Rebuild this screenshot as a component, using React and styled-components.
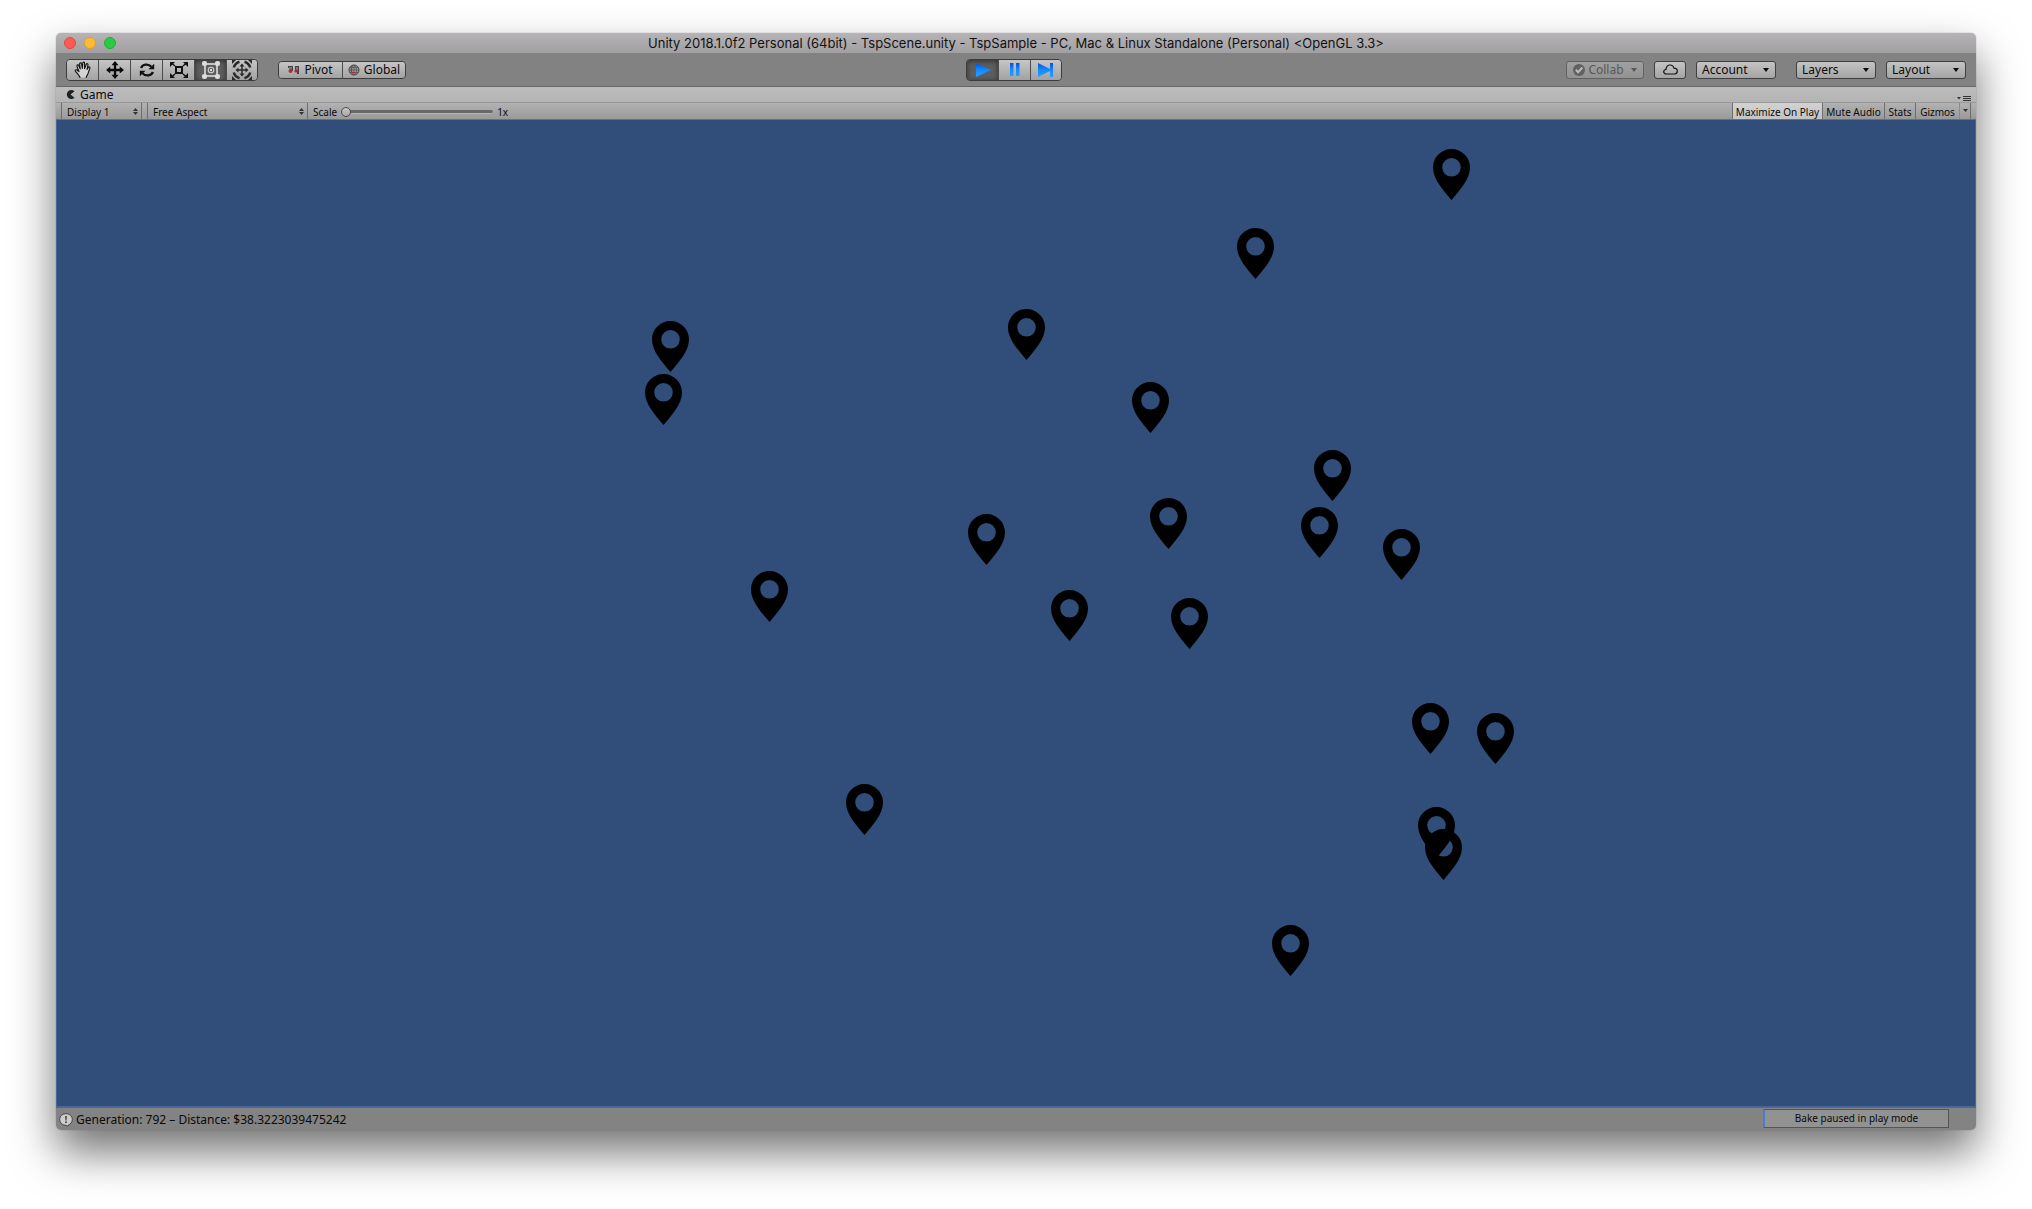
import React from "react";
import styled, { createGlobalStyle } from "styled-components";

const Global = createGlobalStyle`
  * { box-sizing: border-box; }
  body { margin: 0; background: #fff; }
  button, select, input { font: inherit; color: inherit; margin: 0; }
`;

const Desktop = styled.div`
  min-height: 100vh;
  padding: 33px 56px 79px;
  display: flex;
  font-family: "Noto Sans", "Open Sans", sans-serif;
  font-size: 12px;
  color: #0a0a0a;
`;

const Window = styled.main`
  flex: 1;
  min-width: 0;
  display: flex;
  flex-direction: column;
  border-radius: 5px;
  overflow: hidden;
  box-shadow: 0 0 1px rgba(0, 0, 0, 0.5), 0 22px 44px rgba(0, 0, 0, 0.55);
`;

const TitleBar = styled.header`
  height: 20px;
  display: grid;
  grid-template-columns: 1fr auto 1fr;
  align-items: center;
  padding: 0 8px;
  background: linear-gradient(#b7b4b7, #a29fa2);
`;

const Lights = styled.div`
  display: flex;
  gap: 8px;
`;

const Light = styled.button`
  width: 12px;
  height: 12px;
  padding: 0;
  border-radius: 50%;
  border: 1px solid ${(p) => p.$edge};
  background: ${(p) => p.$fill};
`;

const Title = styled.h1`
  margin: 0;
  font: 400 13px/20px Inter, sans-serif;
  color: #111;
  white-space: nowrap;
`;

const Toolbar = styled.div`
  height: 34px;
  display: grid;
  grid-template-columns: 1fr auto 1fr;
  align-items: center;
  padding: 0 10px;
  background: #828282;
  border-bottom: 1px solid #666;
`;

const Cluster = styled.div`
  display: flex;
  align-items: center;
  gap: ${(p) => p.$gap || 0}px;
  justify-content: ${(p) => (p.$end ? "flex-end" : "flex-start")};
`;

const Segments = styled.div`
  display: flex;
  height: ${(p) => (p.$tall ? 22 : 18)}px;
  margin-right: ${(p) => (p.$center ? 4 : 0)}px;
  border: 1px solid #3c3c3c;
  border-radius: 4px;
  overflow: hidden;
`;

const Segment = styled.button`
  width: ${(p) => p.$width || 32}px;
  padding: 0;
  display: flex;
  align-items: center;
  justify-content: center;
  gap: 4px;
  border: 0;
  border-right: 1px solid #4c4c4c;
  line-height: 16px;
  background: linear-gradient(#c6c6c6, #a2a2a2);
  &:last-child { border-right: 0; width: ${(p) => (p.$width || 32) - 2}px; }
  &[aria-pressed="true"] {
    background: #5e5e5e;
    box-shadow: inset 0 1px 5px #2e2e2e;
  }
`;

const control = `
  height: 18px;
  border: 1px solid #404040;
  border-radius: 3px;
  background: linear-gradient(#c4c4c4, #a4a4a4);
`;

const PlainButton = styled.button`
  ${control}
  width: ${(p) => p.$width}px;
  padding: 0;
  display: flex;
  align-items: center;
  justify-content: center;
  gap: 3px;
  line-height: 16px;
  &:disabled {
    color: #585858;
    border-color: #626262;
    background: linear-gradient(#a0a0a0, #929292);
  }
`;

const Picker = styled.label`
  display: grid;
  align-items: center;
  width: ${(p) => p.$width}px;
  > * { grid-area: 1 / 1; }
  > svg { justify-self: end; margin-right: ${(p) => p.$inset || 7}px; pointer-events: none; }
`;

const PopupSelect = styled.select`
  ${control}
  appearance: none;
  width: 100%;
  padding: 0 5px;
  line-height: 16px;
`;

const Spacer = styled.span`
  width: ${(p) => p.$width}px;
`;

const TabRow = styled.div`
  height: 16px;
  display: flex;
  align-items: center;
  justify-content: space-between;
  padding: 0 5px 0 10px;
  background: linear-gradient(#bcbcbc, #b4b4b4);
  border-bottom: 1px solid #989898;
`;

const Tab = styled.button`
  padding: 0;
  border: 0;
  background: none;
  display: flex;
  align-items: center;
  gap: 5px;
  line-height: 15px;
`;

const MenuButton = styled.button`
  padding: 0;
  border: 0;
  background: none;
  display: flex;
  align-self: flex-end;
`;

const ViewBar = styled.div`
  height: 17px;
  display: flex;
  justify-content: space-between;
  padding: 0 5px;
  font-size: 10px;
  background: linear-gradient(#b2b2b2, #9a9a9a);
  border-bottom: 1px solid #707070;
`;

const BarGroup = styled.div`
  display: flex;
  align-items: stretch;
`;

const BarPicker = styled(Picker)`
  border-left: 1px solid #6e6e6e;
  border-right: 1px solid #6e6e6e;
  margin-right: ${(p) => p.$after || 0}px;
`;

const BarSelect = styled.select`
  appearance: none;
  width: 100%;
  height: 16px;
  padding: 2px 5px 0;
  border: 0;
  background: none;
  line-height: 14px;
`;

const ScaleField = styled.label`
  display: flex;
  align-items: center;
  gap: 4px;
  padding: 2px 0 0 5px;
  line-height: 14px;
`;

const Slider = styled.input`
  appearance: none;
  width: 152px;
  height: 10px;
  background: none;
  &::-webkit-slider-runnable-track {
    height: 4px;
    border-radius: 2px;
    background: #686868;
    border-bottom: 1px solid #b4b4b4;
  }
  &::-webkit-slider-thumb {
    appearance: none;
    width: 10px;
    height: 10px;
    margin-top: -3px;
    border-radius: 50%;
    border: 1px solid #4a4a4a;
    background: linear-gradient(#c8c8c8, #a6a6a6);
  }
`;

const Toggle = styled.button`
  width: ${(p) => p.$width}px;
  padding: 2px 0 0;
  border: 0;
  border-left: 1px solid ${(p) => (p.$faint ? "#8a8a8a" : "#6e6e6e")};
  background: none;
  line-height: 14px;
  white-space: nowrap;
  &[aria-pressed="true"] { background: linear-gradient(#d2d2d2, #c4c4c4); }
  &:last-child { border-right: 1px solid #6e6e6e; }
  > svg { display: block; margin: 0 auto 4px; }
`;

const Scene = styled.section`
  flex: 1;
  min-height: 900px;
  position: relative;
  background: #314d79;
  border: solid #46679c;
  border-width: 0 1px 1px;
`;

const Marker = styled.svg`
  position: absolute;
  left: calc(50% + ${(p) => p.$x}px);
  top: calc(50% + ${(p) => p.$y}px);
  width: 37px;
  height: 51px;
  margin: -18px 0 0 -18px;
`;

const StatusBar = styled.footer`
  height: 23px;
  display: flex;
  align-items: flex-start;
  justify-content: space-between;
  padding: 1px 27px 0 3px;
  background: #838383;
  border-top: 1px solid #666;
`;

const Message = styled.p`
  margin: 0;
  display: flex;
  align-items: center;
  gap: 3px;
  line-height: 21px;
`;

const Task = styled.div`
  width: 186px;
  height: 19px;
  border: 1px solid #555;
  border-left: 2px solid #5079cc;
  background: #929292;
  font-size: 10px;
  line-height: 16px;
  text-align: center;
`;

const Arrow = () => (
  <svg width="6" height="4" viewBox="0 0 6 4" aria-hidden="true"><path d="M0 0h6L3 4z" fill="currentColor" /></svg>
);
const SmallArrow = () => (
  <svg width="5" height="3" viewBox="0 0 5 3" aria-hidden="true"><path d="M0 0h5L2.5 3z" fill="#333" /></svg>
);
const Steps = () => (
  <svg width="5" height="7" viewBox="0 0 5 7" aria-hidden="true"><path d="M0 3h5L2.500 0zM0 4h5L2.500 7z" fill="#333" /></svg>
);

const Hand = () => (
  <svg width="18" height="18" viewBox="0 0 18 18" fill="#d4d4d4" stroke="#111" strokeWidth="1.100" strokeLinejoin="round" strokeLinecap="round">
    <path d="M6 16.500C5.500 14.500 3.600 12.500 1.500 10.300c-.9-1.100.6-2 1.500-1.300L5 10.700 3 5.200c-.4-1.400 1.200-1.900 1.700-.7L6.300 8 5.600 3c0-1.400 1.700-1.500 1.900-.2L8.400 7.500 8.800 2c.2-1.200 1.800-1.100 1.800.2V7.600L12.300 3.300c.5-1.200 2-.6 1.700.7L13 8.400l1.300-2c.8-1 2-.3 1.600.8-1 2.300-1.300 4-2 5.700-.5 1.400-1.500 2-1.700 3.600" />
  </svg>
);
const Move = () => (
  <svg width="18" height="18" viewBox="0 0 18 18">
    <path fill="#0a0a0a" d="M9 0l3.500 4.300H10.200V7.800H13.700V5.500L18 9l-4.300 3.500V10.200H10.200V13.700H12.500L9 18l-3.500-4.300H7.800V10.200H4.300V12.500L0 9l4.300-3.500V7.800H7.800V4.300H5.500z" />
  </svg>
);
const Rotate = () => (
  <svg width="16" height="16" viewBox="0 0 16 16" fill="none" stroke="#111" strokeWidth="2.200">
    <path d="M2 6C3.500 2.300 9 1.200 12.500 4.800M14 10C12.500 13.700 7 14.800 3.500 11.200" />
    <path fill="#111" stroke="none" d="M15.200 1.800v5.500H9.500zM.8 14.200V8.700H6.500z" />
  </svg>
);
const Scale = () => (
  <svg width="18" height="16" viewBox="0 0 18 16" fill="none" stroke="#111" strokeWidth="1.500">
    <rect x="6" y="5" width="6" height="6" strokeWidth="2" />
    <path d="M2 1.500l3 2.500M16 1.500L13 4M2 14.500L5 12M16 14.500L13 12" />
    <path fill="#111" stroke="none" d="M0 0h5L0 5zM18 0h-5l5 5zM0 16h5l-5-5zM18 16h-5l5-5z" />
  </svg>
);
const Rect = () => (
  <svg width="18" height="18" viewBox="0 0 18 18">
    <path d="M3 3h12v12H3z" fill="none" stroke="#c4c4c4" strokeWidth="2" />
    <g fill="#dcdcdc">
      <rect x="0" y="0" width="5" height="5" rx="2" />
      <rect x="13" y="0" width="5" height="5" rx="2" />
      <rect x="0" y="13" width="5" height="5" rx="2" />
      <rect x="13" y="13" width="5" height="5" rx="2" />
      <circle cx="9" cy="9" r="1.200" />
    </g>
    <circle cx="9" cy="9" r="2.800" fill="none" stroke="#d0d0d0" strokeWidth="1.100" />
  </svg>
);
const Transform = () => (
  <svg width="20" height="20" viewBox="0 0 20 20">
    <g fill="none" stroke="#2a2a2a">
      <path strokeWidth="2.600" d="M7.500 1.800A8.500 8.500 0 0 0 1.800 7.500M12.500 1.800A8.500 8.500 0 0 1 18.200 7.500M1.800 12.500A8.500 8.500 0 0 0 7.500 18.200M12.500 18.200A8.500 8.500 0 0 0 18.200 12.500" />
      <path strokeWidth="1.500" d="M10 6v8M6 10h8" />
    </g>
    <path fill="#2a2a2a" d="M10 3.500l2.500 3h-5zM10 16.500l2.500-3h-5zM3.500 10l3-2.500v5zM16.500 10l-3-2.500v5zM0 0h4L0 4zM20 0v4l-4-4zM0 20v-4l4 4zM20 20h-4l4-4z" />
  </svg>
);
const PivotIcon = () => (
  <svg width="12" height="10" viewBox="0 0 12 10">
    <path fill="#444" d="M0 1h5v5H3V3H0zM7 1h4v8H9V5H7z" />
    <path fill="#777" d="M1 2h3v3H1zM8 2h2v3H8z" />
    <circle cx="2.500" cy="6" r="2" fill="#b22a3a" /><circle cx="8" cy="6" r="1.600" fill="#b22a3a" />
  </svg>
);
const GlobeIcon = () => (
  <svg width="12" height="12" viewBox="0 0 12 12" fill="none">
    <circle cx="6" cy="6" r="5" fill="#9a9a9a" stroke="#444" />
    <path stroke="#505050" strokeWidth=".7" d="M1 6h10M6 1v10M2 3.500h8M2 8.500h8M6 1C2.500 4 2.500 8 6 11M6 1c3.500 3 3.500 7 0 10" />
    <path stroke="#b22a3a" strokeWidth="1.200" d="M3.500 2.500v6H7" />
  </svg>
);
const Media = ({ d }) => (
  <svg width="16" height="14" viewBox="0 0 16 14">
    <linearGradient id="media" x1="0" y1="0" x2="0" y2="1"><stop offset="0" stopColor="#0a4fe0" /><stop offset=".5" stopColor="#118dff" /><stop offset="1" stopColor="#2c9cff" /></linearGradient>
    <path d={d} fill="url(#media)" />
  </svg>
);
const CollabIcon = () => (
  <svg width="12" height="12" viewBox="0 0 12 12"><circle cx="6" cy="6" r="6" fill="#616161" /><path d="M2.800 5.800l2.300 2.500L9.300 3.500" fill="none" stroke="#bbb" strokeWidth="2" /></svg>
);
const Cloud = () => (
  <svg width="15" height="11" viewBox="0 0 15 11"><path d="M3.500 10C1.700 10 .7 8.900.7 7.700c0-1.300 1-2.200 2.300-2.200C3 2.500 5 1 7 1c2.200 0 3.500 1.300 4 3.200 2 0 3.300 1.300 3.300 2.900S13 10 11.500 10z" fill="none" stroke="#111" strokeWidth="1.200" /></svg>
);
const GameIcon = () => (
  <svg width="9" height="9" viewBox="0 0 9 9"><path fill="#222" d="M8.500 1.300A4.500 4.500 0 1 0 8.500 7.700L4.500 4.500z" /></svg>
);
const PaneMenu = () => (
  <svg width="14" height="7" viewBox="0 0 14 7"><path fill="#333" d="M0 2h4L2 4.500zM6 1h8v1H6zM6 3h8v1H6zM6 5h8v1H6z" /></svg>
);
const InfoIcon = () => (
  <svg width="14" height="14" viewBox="0 0 14 14"><path d="M7 .7c3.500 0 6.300 2.500 6.300 5.800 0 3-2 5-4.300 5.700L8.500 13.400 7 12.300C3.500 12.300.7 9.800.7 6.500S3.500.7 7 .7z" fill="#ccc" stroke="#444" strokeWidth="1" /><path d="M6.200 3h1.600l-.3 4.500h-1zM6.200 8.500h1.600V10H6.200z" fill="#333" /></svg>
);

const tools = [
  ["Hand", Hand], ["Move", Move], ["Rotate", Rotate],
  ["Scale", Scale], ["Rect", Rect], ["Transform", Transform],
];

const media = [
  ["Play", "M1 0L16 7 1 14z"],
  ["Pause", "M3 0h3.500v13H3zM9 0h3.500v13H9z"],
  ["Step", "M0 0L12 6V0H15V14H12V8L0 14z"],
];

const cities = [
  [435, -446], [239, -367], [10, -286], [-346, -274], [-353, -221],
  [134, -213], [316, -145], [152, -97], [303, -88], [385, -66],
  [-30, -81], [-247, -24], [53, -5], [173, 3], [414, 108],
  [479, 118], [-152, 189], [420, 212], [427, 234], [274, 330],
];

const Popup = ({ label }) => (
  <Picker $width={80}>
    <PopupSelect aria-label={label}><option>{label}</option></PopupSelect>
    <Arrow />
  </Picker>
);

export default function App() {
  return (
    <Desktop>
      <Global />
      <Window>
        <TitleBar>
          <Lights>
            <Light aria-label="Close" $fill="#ff5b53" $edge="#e2463f" />
            <Light aria-label="Minimize" $fill="#ffbc2e" $edge="#e0a028" />
            <Light aria-label="Zoom" $fill="#2acb42" $edge="#1fae34" />
          </Lights>
          <Title>Unity 2018.1.0f2 Personal (64bit) - TspScene.unity - TspSample - PC, Mac &amp; Linux Standalone (Personal) &lt;OpenGL 3.3&gt;</Title>
        </TitleBar>
        <Toolbar>
          <Cluster $gap={20}>
            <Segments $tall>
              {tools.map(([name, Icon]) => (
                <Segment key={name} aria-label={name} aria-pressed={name === "Rect"}><Icon /></Segment>
              ))}
            </Segments>
            <Segments>
              <Segment $width={64}><PivotIcon />Pivot</Segment>
              <Segment $width={64}><GlobeIcon />Global</Segment>
            </Segments>
          </Cluster>
          <Segments $tall $center>
            {media.map(([name, d]) => (
              <Segment key={name} aria-label={name} aria-pressed={name === "Play"}><Media d={d} /></Segment>
            ))}
          </Segments>
          <Cluster $gap={10} $end>
            <PlainButton $width={78} disabled><CollabIcon />Collab<Spacer $width={1} /><Arrow /></PlainButton>
            <PlainButton $width={32} aria-label="Services"><Cloud /></PlainButton>
            <Popup label="Account" />
            <Spacer $width={0} />
            <Popup label="Layers" />
            <Popup label="Layout" />
          </Cluster>
        </Toolbar>
        <TabRow>
          <Tab><GameIcon />Game</Tab>
          <MenuButton aria-label="Pane menu"><PaneMenu /></MenuButton>
        </TabRow>
        <ViewBar>
          <BarGroup>
            <BarPicker $width={81} $inset={3} $after={5}>
              <BarSelect aria-label="Display"><option>Display 1</option></BarSelect>
              <Steps />
            </BarPicker>
            <BarPicker $width={161} $inset={3}>
              <BarSelect aria-label="Aspect"><option>Free Aspect</option></BarSelect>
              <Steps />
            </BarPicker>
            <ScaleField>Scale<Slider type="range" min="1" max="5" defaultValue="1" /><span>1x</span></ScaleField>
          </BarGroup>
          <BarGroup>
            <Toggle $width={90} aria-pressed="true">Maximize On Play</Toggle>
            <Toggle $width={62} aria-pressed="false">Mute Audio</Toggle>
            <Toggle $width={31} aria-pressed="false">Stats</Toggle>
            <Toggle $width={44} aria-pressed="false">Gizmos</Toggle>
            <Toggle $width={12} $faint aria-label="Gizmo options"><SmallArrow /></Toggle>
          </BarGroup>
        </ViewBar>
        <Scene aria-label="Game view">
          {cities.map(([x, y]) => (
            <Marker key={`${x},${y}`} $x={x} $y={y} viewBox="0 0 37 51">
              <path fillRule="evenodd" d="M18.500 0C28.700 0 37 8.200 37 18.500 37 30 27 41 18.500 51 10 41 0 30 0 18.500 0 8.200 8.300 0 18.500 0zM18.500 9a9.300 9.300 0 1 0 0 18.600 9.300 9.300 0 1 0 0-18.600z" />
            </Marker>
          ))}
        </Scene>
        <StatusBar>
          <Message><InfoIcon />Generation: 792 – Distance: $38.3223039475242</Message>
          <Task>Bake paused in play mode</Task>
        </StatusBar>
      </Window>
    </Desktop>
  );
}
